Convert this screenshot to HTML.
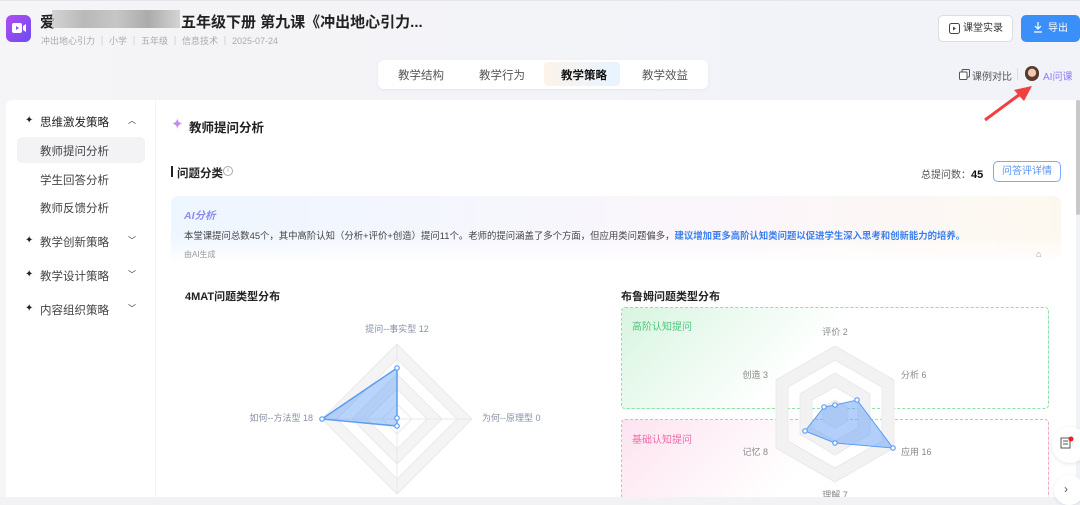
<!DOCTYPE html>
<html><head><meta charset="utf-8"><style>
*{margin:0;padding:0;box-sizing:border-box}
body{width:1080px;height:505px;overflow:hidden;background:linear-gradient(90deg,#f5f4f7,#f1f3f8);font-family:"Liberation Sans","Noto Sans CJK SC",sans-serif;position:relative;color:#222}
.a{position:absolute}
.t{font-size:10px;color:#999;white-space:nowrap}
</style></head><body>
<div class="a" style="left:0;top:0;width:1080px;height:1px;background:#e6e6ea"></div>
<div class="a" style="left:6px;top:15px;width:25px;height:27px;border-radius:6px;background:linear-gradient(135deg,#b34cf2,#6a4cf0)"></div>
<svg class="a" style="left:11px;top:21px" width="16" height="14"><rect x="1" y="2" width="10" height="10" rx="2" fill="#fff"/><path d="M12 5l3-2v8l-3-2z" fill="#fff"/><path d="M5 5l3 2-3 2z" fill="#8a55f0"/></svg>
<div class="a" style="left:40px;top:11px;font-size:15px;font-weight:bold;color:#222">爱</div>
<div class="a" style="left:52px;top:10px;width:128px;height:18px;background:linear-gradient(90deg,#ccc,#aaa,#bbb,#999,#ccc);opacity:.8"></div>
<div class="a" style="left:181px;top:11px;font-size:15px;font-weight:bold;color:#222;white-space:nowrap">五年级下册 第九课《冲出地心引力...</div>
<div class="a t" style="left:41px;top:34px;font-size:9px;color:#aaa">冲出地心引力 ｜ 小学 ｜ 五年级 ｜ 信息技术 ｜ 2025-07-24</div>
<div class="a" style="left:938px;top:15px;width:75px;height:27px;border:1px solid #ddd;border-radius:5px;background:#fff;font-size:10px;color:#333;line-height:25px;padding-left:24px">课堂实录</div>
<svg class="a" style="left:949px;top:23px" width="11" height="11"><rect x=".5" y=".5" width="10" height="10" rx="2" fill="none" stroke="#444"/><path d="M4 3.5l3 2-3 2z" fill="#444"/></svg>
<div class="a" style="left:1021px;top:15px;width:59px;height:27px;border-radius:5px;background:#3a8ff8;color:#fff;font-size:10px;line-height:27px;padding-left:27px">导出</div>
<svg class="a" style="left:1033px;top:21px" width="10" height="12"><path d="M5 1v7M2 5l3 3 3-3M1 11h8" stroke="#fff" fill="none" stroke-width="1.2"/></svg>
<div class="a" style="left:378px;top:60px;width:330px;height:29px;background:#fff;border-radius:6px;box-shadow:0 1px 3px rgba(0,0,0,.05)"></div>
<div class="a" style="left:544px;top:62px;width:76px;height:24px;border-radius:4px;background:linear-gradient(90deg,#fdf3ea,#e8f4ff)"></div>
<div class="a" style="left:398px;top:67px;font-size:11.5px;color:#555">教学结构</div>
<div class="a" style="left:479px;top:67px;font-size:11.5px;color:#555">教学行为</div>
<div class="a" style="left:561px;top:67px;font-size:11.5px;color:#111;font-weight:bold">教学策略</div>
<div class="a" style="left:642px;top:67px;font-size:11.5px;color:#555">教学效益</div>
<svg class="a" style="left:959px;top:69px" width="11" height="11"><rect x="3" y=".5" width="7.5" height="7.5" rx="1" fill="none" stroke="#555"/><rect x=".5" y="3" width="7.5" height="7.5" rx="1" fill="#fff" stroke="#555"/></svg>
<div class="a" style="left:972px;top:68px;font-size:10px;color:#555">课例对比</div>
<div class="a" style="left:1017px;top:68px;width:1px;height:12px;background:#ddd"></div>
<div class="a" style="left:1025px;top:66px;width:14px;height:15px;border-radius:7px;background:radial-gradient(circle at 50% 45%,#f2c9b0 35%,#5a3a2c 40%)"></div>
<div class="a" style="left:1043px;top:68px;font-size:10px;color:#8c7cf5">AI问课</div>
<div class="a" style="left:6px;top:100px;width:149px;height:405px;background:#fff;border-radius:6px 0 0 0"></div>
<div class="a" style="left:156px;top:100px;width:920px;height:397px;background:#fff"></div>
<div class="a" style="left:1076px;top:100px;width:4px;height:115px;background:#c8c8c8;border-radius:2px"></div>
<div class="a" style="left:17px;top:137px;width:128px;height:26px;background:#f3f3f5;border-radius:5px"></div>
<div class="a" style="left:25px;top:115px;font-size:10px">✦</div><div class="a" style="left:40px;top:114px;font-size:11.5px;color:#222">思维激发策略</div><div class="a" style="left:128px;top:115px;font-size:8px">︿</div>
<div class="a" style="left:40px;top:143px;font-size:11.5px;color:#444">教师提问分析</div>
<div class="a" style="left:40px;top:172px;font-size:11.5px;color:#444">学生回答分析</div>
<div class="a" style="left:40px;top:200px;font-size:11.5px;color:#444">教师反馈分析</div>
<div class="a" style="left:25px;top:235px;font-size:10px">✦</div><div class="a" style="left:40px;top:234px;font-size:11.5px;color:#444">教学创新策略</div><div class="a" style="left:128px;top:235px;font-size:8px">﹀</div>
<div class="a" style="left:25px;top:269px;font-size:10px">✦</div><div class="a" style="left:40px;top:268px;font-size:11.5px;color:#444">教学设计策略</div><div class="a" style="left:128px;top:269px;font-size:8px">﹀</div>
<div class="a" style="left:25px;top:303px;font-size:10px">✦</div><div class="a" style="left:40px;top:302px;font-size:11.5px;color:#444">内容组织策略</div><div class="a" style="left:128px;top:303px;font-size:8px">﹀</div>
<div class="a" style="left:171px;top:115px;font-size:15px;color:#c58cf5">✦</div>
<div class="a" style="left:189px;top:117px;font-size:12.5px;font-weight:bold">教师提问分析</div>
<div class="a" style="left:171px;top:166px;width:2px;height:11px;background:#222"></div>
<div class="a" style="left:177px;top:165px;font-size:11.5px;font-weight:bold">问题分类</div>
<div class="a" style="left:223px;top:166px;width:10px;height:10px;border:1px solid #aaa;border-radius:50%;font-size:7px;color:#aaa;text-align:center;line-height:8px">i</div>
<div class="a" style="left:921px;top:166px;font-size:10px;color:#555">总提问数：<b style="color:#111;font-size:11px">45</b></div>
<div class="a" style="left:993px;top:161px;width:68px;height:21px;border:1px solid #78acf6;border-radius:5px;color:#5b95ef;font-size:10px;text-align:center;line-height:19px">问答评详情</div>
<div class="a" style="left:171px;top:196px;width:890px;height:66px;border-radius:7px;background:linear-gradient(180deg,rgba(255,255,255,0) 60%,#fff),linear-gradient(90deg,#eef6ff,#fbf6fc 60%,#fdf8ef)"></div>
<div class="a" style="left:184px;top:208px;font-size:10.5px;font-weight:bold;font-style:italic;color:#8c8cf0">AI分析</div>
<div class="a t" style="left:184px;top:228px;color:#444;font-size:9.4px">本堂课提问总数45个，其中高阶认知（分析+评价+创造）提问11个。老师的提问涵盖了多个方面，但应用类问题偏多，<b style="color:#3a7ff0">建议增加更多高阶认知类问题以促进学生深入思考和创新能力的培养。</b></div>
<div class="a t" style="left:184px;top:249px;font-size:8px">由AI生成</div>
<div class="a t" style="left:1036px;top:249px;font-size:9px">⌂</div>
<div class="a" style="left:185px;top:288px;font-size:11px;font-weight:bold">4MAT问题类型分布</div>
<div class="a" style="left:621px;top:288px;font-size:11px;font-weight:bold">布鲁姆问题类型分布</div>
<div class="a" style="left:621px;top:307px;width:428px;height:102px;border:1px dashed #8fe0a8;border-radius:4px;background:linear-gradient(135deg,#d8f5e0,#fff 45%)"></div>
<div class="a" style="left:632px;top:318px;font-size:10px;color:#4cc77a">高阶认知提问</div>
<div class="a" style="left:621px;top:419px;width:428px;height:84px;border:1px dashed #f2a8cc;border-bottom:none;border-radius:4px 4px 0 0;background:linear-gradient(135deg,#fde4f0,#fff 45%)"></div>
<div class="a" style="left:632px;top:431px;font-size:10px;color:#f06aa8">基础认知提问</div>
<svg class="a" style="left:0;top:0" width="1080" height="505">
<g fill-rule="evenodd" stroke="#e6e6e6" stroke-width=".8">
<path d="M397 344L472 419L397 494L322 419ZM397 359L457 419L397 479L337 419Z" fill="#f4f4f4"/>
<path d="M397 374L442 419L397 464L352 419ZM397 389L427 419L397 449L367 419Z" fill="#f4f4f4"/>
<path d="M397 404L412 419L397 434L382 419Z" fill="#fff"/>
<path d="M835 346L894 380L894 448L835 482L776 448L776 380ZM835 360L882 387L882 441L835 468L788 441L788 387Z" fill="#f2f2f2"/>
<path d="M835 373L870 394L870 434L835 455L800 434L800 394ZM835 387L858 400L858 428L835 441L812 428L812 400Z" fill="#f2f2f2"/>
<path d="M835 400L847 407L847 421L835 428L823 421L823 407Z" fill="#f2f2f2"/>
</g>
<path d="M397 344V494M322 419H472" stroke="#e4e8f5"/>
<path d="M397 368L322 419L397 426L397 419Z" fill="rgba(100,160,245,.45)" stroke="#5b9cf5" stroke-width="1.5"/>
<g fill="#fff" stroke="#5b9cf5" stroke-width="1.2"><circle cx="397" cy="368" r="2.2"/><circle cx="322" cy="419" r="2.2"/><circle cx="397" cy="426" r="2.2"/><circle cx="397" cy="418" r="2.2"/></g>
<path d="M835 405L857 400L893 448L835 443L805 431L824 407Z" fill="rgba(100,160,245,.5)" stroke="#5b9cf5"/>
<g fill="#fff" stroke="#5b9cf5" stroke-width="1.2"><circle cx="835" cy="405" r="2.2"/><circle cx="857" cy="400" r="2.2"/><circle cx="893" cy="448" r="2.2"/><circle cx="835" cy="443" r="2.2"/><circle cx="805" cy="431" r="2.2"/><circle cx="824" cy="407" r="2.2"/></g>
<g font-size="9" fill="#8890a8" font-family="Liberation Sans,Noto Sans CJK SC,sans-serif">
<text x="397" y="332" text-anchor="middle">提问--事实型 12</text>
<text x="313" y="421" text-anchor="end">如何--方法型 18</text>
<text x="482" y="421">为何--原理型 0</text>
</g>
<g font-size="9" fill="#888" font-family="Liberation Sans,Noto Sans CJK SC,sans-serif">
<text x="835" y="335" text-anchor="middle">评价 2</text>
<text x="901" y="378">分析 6</text>
<text x="901" y="455">应用 16</text>
<text x="835" y="498" text-anchor="middle">理解 7</text>
<text x="768" y="455" text-anchor="end">记忆 8</text>
<text x="768" y="378" text-anchor="end">创造 3</text>
</g>
</svg>
<div class="a" style="left:0;top:497px;width:1052px;height:8px;background:#f2f2f4"></div>
<div class="a" style="left:1052px;top:427px;width:36px;height:36px;border-radius:50%;background:#fff;box-shadow:0 1px 4px rgba(0,0,0,.1)"></div>
<svg class="a" style="left:1060px;top:436px" width="14" height="14"><rect x="1" y="2" width="9" height="10" fill="none" stroke="#555"/><path d="M3 5h5M3 8h5" stroke="#555"/><circle cx="11" cy="3" r="2.5" fill="#f02020"/></svg>
<div class="a" style="left:1054px;top:475px;width:30px;height:30px;border-radius:50%;background:#fff;box-shadow:0 1px 4px rgba(0,0,0,.1);font-size:12px;color:#555;line-height:28px;padding-left:10px">›</div>
<svg class="a" style="left:980px;top:84px;z-index:5" width="56" height="40"><path d="M5 36L43 8" stroke="#f04040" stroke-width="3"/><path d="M52 2L34 6l10 11z" fill="#f04040"/></svg>
</body></html>
